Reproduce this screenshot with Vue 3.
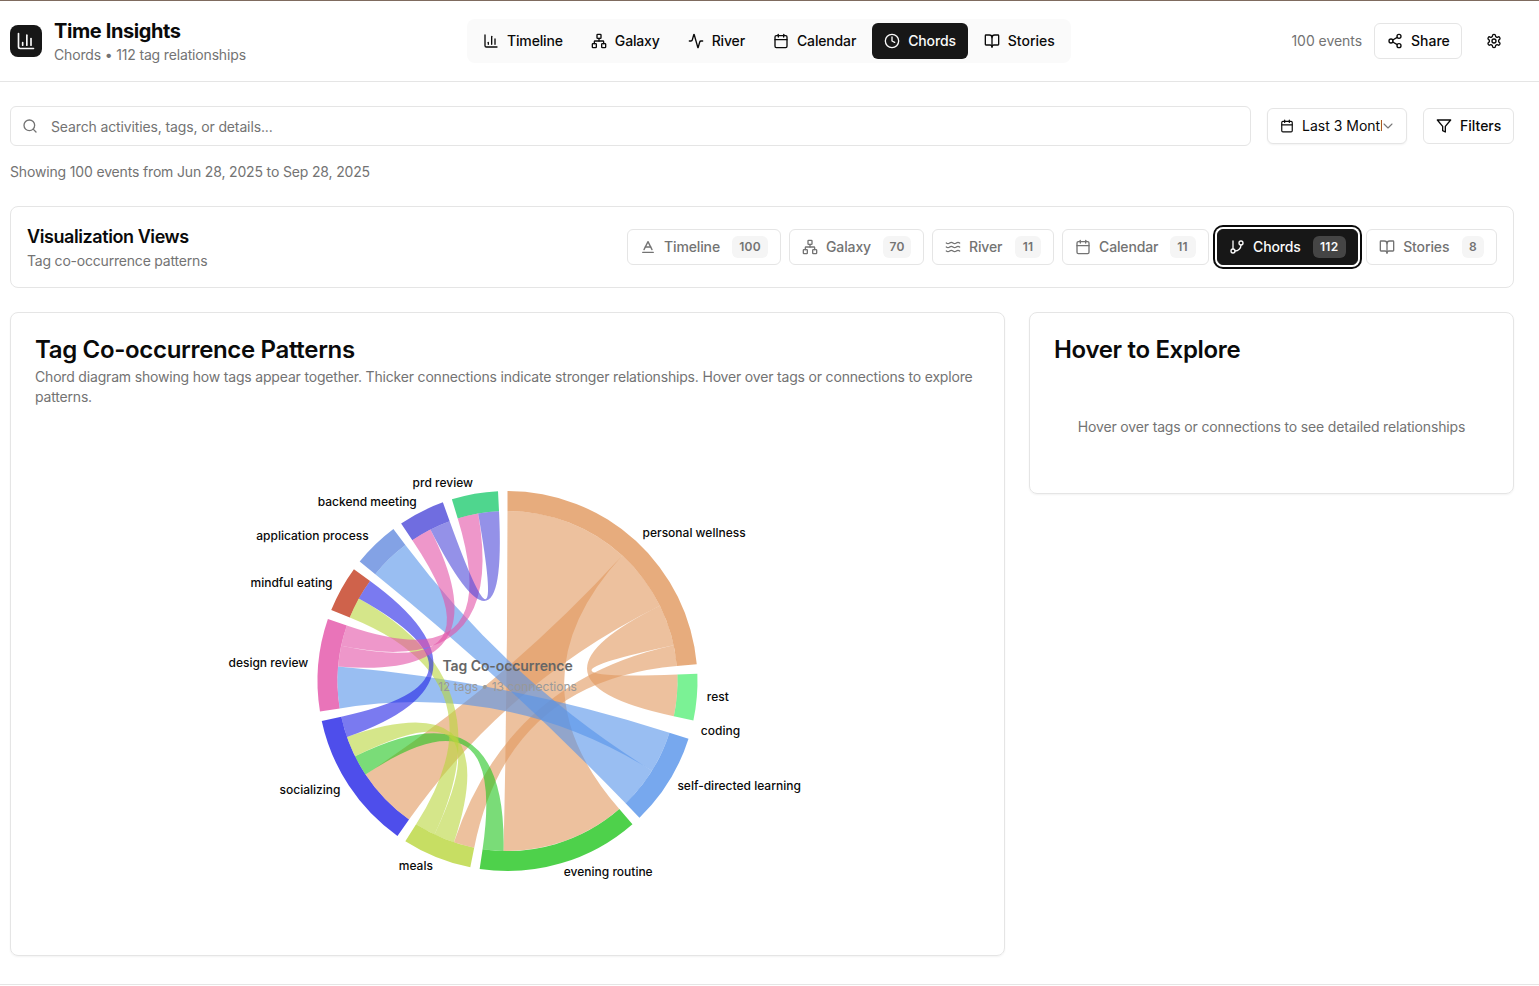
<script setup>
const ICONS = {
  chart: ['M3 3v16a2 2 0 0 0 2 2h16', 'M18 17V9', 'M13 17V5', 'M8 17v-3'],
  network: [
    'M17 16h4a1 1 0 0 1 1 1v4a1 1 0 0 1-1 1h-4a1 1 0 0 1-1-1v-4a1 1 0 0 1 1-1z',
    'M3 16h4a1 1 0 0 1 1 1v4a1 1 0 0 1-1 1H3a1 1 0 0 1-1-1v-4a1 1 0 0 1 1-1z',
    'M10 2h4a1 1 0 0 1 1 1v4a1 1 0 0 1-1 1h-4a1 1 0 0 1-1-1V3a1 1 0 0 1 1-1z',
    'M5 16v-3a1 1 0 0 1 1-1h12a1 1 0 0 1 1 1v3',
    'M12 12V8',
  ],
  activity: ['M22 12h-2.48a2 2 0 0 0-1.93 1.46l-2.35 8.36a.25.25 0 0 1-.48 0L9.24 2.18a.25.25 0 0 0-.48 0l-2.35 8.36A2 2 0 0 1 4.49 12H2'],
  calendar: ['M8 2v4', 'M16 2v4', 'M5 4h14a2 2 0 0 1 2 2v14a2 2 0 0 1-2 2H5a2 2 0 0 1-2-2V6a2 2 0 0 1 2-2z', 'M3 10h18'],
  clock: ['M12 2a10 10 0 1 0 0 20a10 10 0 1 0 0-20z', 'M12 6v6l4 2'],
  book: ['M12 7v14', 'M3 18a1 1 0 0 1-1-1V4a1 1 0 0 1 1-1h5a4 4 0 0 1 4 4 4 4 0 0 1 4-4h5a1 1 0 0 1 1 1v13a1 1 0 0 1-1 1h-6a3 3 0 0 0-3 3 3 3 0 0 0-3-3z'],
  share: ['M21 5a3 3 0 1 1-6 0a3 3 0 1 1 6 0z', 'M9 12a3 3 0 1 1-6 0a3 3 0 1 1 6 0z', 'M21 19a3 3 0 1 1-6 0a3 3 0 1 1 6 0z', 'M8.59 13.51l6.83 3.98', 'M15.41 6.51l-6.82 3.98'],
  gear: [
    'M12.22 2h-.44a2 2 0 0 0-2 2v.18a2 2 0 0 1-1 1.73l-.43.25a2 2 0 0 1-2 0l-.15-.08a2 2 0 0 0-2.73.73l-.22.38a2 2 0 0 0 .73 2.73l.15.1a2 2 0 0 1 1 1.72v.51a2 2 0 0 1-1 1.74l-.15.09a2 2 0 0 0-.73 2.73l.22.38a2 2 0 0 0 2.73.73l.15-.08a2 2 0 0 1 2 0l.43.25a2 2 0 0 1 1 1.73V20a2 2 0 0 0 2 2h.44a2 2 0 0 0 2-2v-.18a2 2 0 0 1 1-1.73l.43-.25a2 2 0 0 1 2 0l.15.08a2 2 0 0 0 2.73-.73l.22-.39a2 2 0 0 0-.73-2.73l-.15-.08a2 2 0 0 1-1-1.74v-.5a2 2 0 0 1 1-1.74l.15-.09a2 2 0 0 0 .73-2.73l-.22-.38a2 2 0 0 0-2.73-.73l-.15.08a2 2 0 0 1-2 0l-.43-.25a2 2 0 0 1-1-1.73V4a2 2 0 0 0-2-2z',
    'M15 12a3 3 0 1 1-6 0a3 3 0 1 1 6 0z',
  ],
  search: ['M19 11a8 8 0 1 1-16 0a8 8 0 1 1 16 0z', 'M21 21l-4.3-4.3'],
  funnel: ['M22 3H2l8 9.46V19l4 2v-8.54L22 3z'],
  chevron: ['M6 9l6 6 6-6'],
  baseline: ['M4 20h16', 'M6 16l6-12 6 12', 'M8 12h8'],
  waves: [
    'M2 6c.6.5 1.2 1 2.5 1C7 7 7 5 9.5 5c2.6 0 2.4 2 5 2 2.5 0 2.5-2 5-2 1.3 0 1.9.5 2.5 1',
    'M2 12c.6.5 1.2 1 2.5 1 2.5 0 2.5-2 5-2 2.6 0 2.4 2 5 2 2.5 0 2.5-2 5-2 1.3 0 1.9.5 2.5 1',
    'M2 18c.6.5 1.2 1 2.5 1 2.5 0 2.5-2 5-2 2.6 0 2.4 2 5 2 2.5 0 2.5-2 5-2 1.3 0 1.9.5 2.5 1',
  ],
  branch: ['M6 3v12', 'M21 6a3 3 0 1 1-6 0a3 3 0 1 1 6 0z', 'M9 18a3 3 0 1 1-6 0a3 3 0 1 1 6 0z', 'M18 9a9 9 0 0 1-9 9'],
}

const navItems = [
  { label: 'Timeline', icon: 'chart' },
  { label: 'Galaxy', icon: 'network' },
  { label: 'River', icon: 'activity' },
  { label: 'Calendar', icon: 'calendar' },
  { label: 'Chords', icon: 'clock', active: true },
  { label: 'Stories', icon: 'book' },
]
const views = [
  { label: 'Timeline', icon: 'baseline', count: 100, cls: 'w-timeline' },
  { label: 'Galaxy', icon: 'network', count: 70, cls: 'w-galaxy' },
  { label: 'River', icon: 'waves', count: 11, cls: 'w-river' },
  { label: 'Calendar', icon: 'calendar', count: 11, cls: 'w-calendar' },
  { label: 'Chords', icon: 'branch', count: 112, cls: 'w-chords', active: true },
  { label: 'Stories', icon: 'book', count: 8, cls: 'w-stories' },
]

// Chord layout
const tags = [
  { name: 'personal wellness', color: '#e1975d' },
  { name: 'rest', color: '#5aef7b' },
  { name: 'coding', color: '#5592ea' },
  { name: 'self-directed learning', color: '#5592ea' },
  { name: 'evening routine', color: '#22c51e' },
  { name: 'meals', color: '#b9d63c' },
  { name: 'socializing', color: '#2222e6' },
  { name: 'design review', color: '#e351a7' },
  { name: 'mindful eating', color: '#c33b1e' },
  { name: 'application process', color: '#648bde' },
  { name: 'backend meeting', color: '#4c48d8' },
  { name: 'prd review', color: '#23cc72' },
]
// [source, target, weight]
const links = [
  [0, 1, 2], [0, 4, 6], [0, 5, 1], [0, 6, 3],
  [3, 7, 2], [3, 9, 2],
  [4, 6, 1],
  [5, 6, 1], [5, 8, 1],
  [6, 8, 1],
  [7, 10, 1], [7, 11, 1],
  [10, 11, 1],
]
const INNER = 170
const OUTER = 190
const PAD = 0.05
const total = links.reduce((s, l) => s + l[2] * 2, 0)
const unit = (Math.PI * 2 - PAD * tags.length) / total
const pt = (a, r) => `${(Math.sin(a) * r).toFixed(3)},${(-Math.cos(a) * r).toFixed(3)}`

const spans = {}
let angle = 0
const groups = tags.map((tag, i) => {
  const start = angle
  links
    .filter((l) => l[0] === i || l[1] === i)
    .map((l) => ({ other: l[0] === i ? l[1] : l[0], value: l[2] }))
    .sort((a, b) => b.value - a.value || a.other - b.other)
    .forEach((s) => {
      spans[`${i}-${s.other}`] = [angle, angle + s.value * unit]
      angle += s.value * unit
    })
  const end = angle
  angle += PAD
  const mid = (start + end) / 2
  return {
    ...tag,
    path: end > start
      ? `M${pt(start, OUTER)}A${OUTER},${OUTER} 0 0 1 ${pt(end, OUTER)}L${pt(end, INNER)}A${INNER},${INNER} 0 0 0 ${pt(start, INNER)}Z`
      : '',
    x: Math.sin(mid) * 200,
    y: -Math.cos(mid) * 200 - 1,
    anchor: mid > Math.PI ? 'end' : 'start',
  }
})
const ribbons = links.map(([s, t]) => {
  const [a0, a1] = spans[`${s}-${t}`]
  const [b0, b1] = spans[`${t}-${s}`]
  return {
    color: tags[s].color,
    path: `M${pt(a0, INNER)}A${INNER},${INNER} 0 0 1 ${pt(a1, INNER)}Q0,0 ${pt(b0, INNER)}A${INNER},${INNER} 0 0 1 ${pt(b1, INNER)}Q0,0 ${pt(a0, INNER)}Z`,
  }
})
</script>

<template>
  <div class="page">
    <header class="header">
      <div class="brand">
        <div class="logo">
          <svg class="icon i20" viewBox="0 0 24 24"><path v-for="d in ICONS.chart" :key="d" :d="d" /></svg>
        </div>
        <div>
          <h1>Time Insights</h1>
          <p class="muted">Chords • 112 tag relationships</p>
        </div>
      </div>
      <nav class="nav">
        <button v-for="n in navItems" :key="n.label" class="nav-btn" :class="{ active: n.active }">
          <svg class="icon" viewBox="0 0 24 24"><path v-for="d in ICONS[n.icon]" :key="d" :d="d" /></svg>
          <span>{{ n.label }}</span>
        </button>
      </nav>
      <div class="actions">
        <span class="muted count">100 events</span>
        <button class="outline share">
          <svg class="icon" viewBox="0 0 24 24"><path v-for="d in ICONS.share" :key="d" :d="d" /></svg>
          <span>Share</span>
        </button>
        <button class="ghost">
          <svg class="icon" viewBox="0 0 24 24"><path v-for="d in ICONS.gear" :key="d" :d="d" /></svg>
        </button>
      </div>
    </header>

    <main class="main">
      <div class="search-row">
        <div class="search">
          <svg class="icon" viewBox="0 0 24 24"><path v-for="d in ICONS.search" :key="d" :d="d" /></svg>
          <span>Search activities, tags, or details...</span>
        </div>
        <button class="outline range">
          <svg class="icon i14" viewBox="0 0 24 24"><path v-for="d in ICONS.calendar" :key="d" :d="d" /></svg>
          <span class="clip">Last 3 Months</span>
          <svg class="icon chev" viewBox="0 0 24 24"><path v-for="d in ICONS.chevron" :key="d" :d="d" /></svg>
        </button>
        <button class="outline filters">
          <svg class="icon" viewBox="0 0 24 24"><path v-for="d in ICONS.funnel" :key="d" :d="d" /></svg>
          <span>Filters</span>
        </button>
      </div>
      <p class="muted showing">Showing 100 events from Jun 28, 2025 to Sep 28, 2025</p>

      <section class="views">
        <div>
          <h2>Visualization Views</h2>
          <p class="muted">Tag co-occurrence patterns</p>
        </div>
        <div class="view-list">
          <button v-for="v in views" :key="v.label" class="view" :class="[v.cls, { active: v.active }]">
            <svg class="icon" viewBox="0 0 24 24"><path v-for="d in ICONS[v.icon]" :key="d" :d="d" /></svg>
            <span>{{ v.label }}</span>
            <span class="badge">{{ v.count }}</span>
          </button>
        </div>
      </section>

      <div class="cards">
        <section class="card chart-card">
          <h3>Tag Co-occurrence Patterns</h3>
          <p class="muted desc">Chord diagram showing how tags appear together. Thicker connections indicate stronger relationships. Hover over tags or connections to explore patterns.</p>
          <svg class="chord" viewBox="-350.5 -250 700 500">
            <path v-for="g in groups" :key="g.name" :d="g.path" :fill="g.color" fill-opacity="0.8" />
            <text v-for="g in groups" :key="'t' + g.name" class="tag" :x="g.x" :y="g.y" dy="0.35em" :text-anchor="g.anchor">{{ g.name }}</text>
            <path v-for="(r, i) in ribbons" :key="i" :d="r.path" :fill="r.color" fill-opacity="0.6" />
            <text class="c-title" x="0" y="-10" text-anchor="middle">Tag Co-occurrence</text>
            <text class="c-sub" x="0" y="10" text-anchor="middle">12 tags • 13 connections</text>
          </svg>
        </section>
        <section class="card side">
          <h3>Hover to Explore</h3>
          <p class="muted hint">Hover over tags or connections to see detailed relationships</p>
        </section>
      </div>
    </main>
    <footer class="footer"></footer>
  </div>
</template>

<style>
html, body { margin: 0; background: #fff; overflow: hidden; }
</style>
<style scoped>
* { box-sizing: border-box; }
.page { height: 986px; overflow: hidden; display: flex; flex-direction: column; border-top: 1px solid #7f6b5f; font: 400 14px/20px Inter, "Liberation Sans", sans-serif; letter-spacing: -0.16px; color: #0a0a0a; background: #fff; }
h1, h2, h3, p { margin: 0; }
button { font: inherit; font-weight: 500; letter-spacing: -0.15px; color: inherit; background: #fff; border: 0; padding: 0; display: flex; align-items: center; gap: 8px; white-space: nowrap; }
.muted { color: #737373; }
.count { letter-spacing: -0.05px; }
.icon { width: 16px; height: 16px; flex: none; fill: none; stroke: currentColor; stroke-width: 2; stroke-linecap: round; stroke-linejoin: round; }
.i20 { width: 20px; height: 20px; }
.i14 { width: 14px; height: 14px; }
.header { height: 81px; flex: none; display: grid; grid-template-columns: 457px 604px 1fr; align-items: center; padding: 0 25px 0 10px; border-bottom: 1px solid #e5e5e5; }
.brand { display: flex; align-items: center; gap: 12px; }
.logo { width: 32px; height: 32px; border-radius: 8px; background: #171717; color: #fafafa; display: grid; place-items: center; }
h1 { font-size: 20px; line-height: 28px; font-weight: 700; letter-spacing: -0.4px; }
.nav { height: 44px; padding: 4px; border-radius: 8px; background: #fafafa; display: flex; gap: 4px; }
.nav-btn { height: 36px; padding: 0 12px; border-radius: 6px; background: transparent; }
.nav-btn.active { background: #171717; color: #fafafa; }
.nav-btn:last-child { letter-spacing: 0; }
.actions { display: flex; align-items: center; justify-content: flex-end; gap: 12px; }
.outline { height: 36px; border: 1px solid #e5e5e5; border-radius: 6px; padding: 0 12px; }
.share { width: 88px; letter-spacing: 0; }
.ghost { width: 40px; height: 36px; justify-content: center; }
.main { padding: 24px 25px 0 10px; height: 902px; flex: none; }
.search-row { display: flex; align-items: center; gap: 16px; }
.search { flex: 1; height: 40px; border: 1px solid #e5e5e5; border-radius: 6px; display: flex; align-items: center; gap: 13px; padding: 0 11px; color: #737373; letter-spacing: -0.13px; }
.search span { padding-top: 2px; }
.range { width: 140px; font-weight: 400; box-shadow: 0 1px 2px rgba(0, 0, 0, 0.05); gap: 0; letter-spacing: 0; }
.clip { width: 80px; overflow: hidden; margin-left: 8px; flex: none; }
.chev { margin-left: -2px; stroke-width: 1.6; opacity: 0.55; }
.filters { width: 91px; letter-spacing: 0; }
.showing { margin-top: 16px; }
.views { margin-top: 24px; height: 82px; border: 1px solid #e5e5e5; border-radius: 8px; padding: 0 16px; display: flex; justify-content: space-between; align-items: center; }
.views p { letter-spacing: -0.2px; }
h2 { font-size: 18px; line-height: 28px; font-weight: 600; letter-spacing: -0.42px; }
.view-list { display: flex; gap: 8px; }
.view { height: 36px; border: 1px solid #e5e5e5; border-radius: 6px; padding: 0 12px; color: #737373; letter-spacing: -0.13px; }
.view.active { background: #171717; border-color: #171717; color: #fafafa; box-shadow: 0 0 0 2px #fff, 0 0 0 4px #0a0a0a; z-index: 1; }
.badge { margin-left: auto; height: 22px; line-height: 22px; text-align: center; border-radius: 6px; background: #f5f5f5; font-size: 12px; font-weight: 600; letter-spacing: 0.2px; }
.active .badge { background: #454545; }
.w-timeline { width: 154px; }
.w-timeline .badge { width: 36px; }
.w-galaxy { width: 135px; }
.w-galaxy .badge { width: 28px; }
.w-river { width: 122px; }
.w-river .badge { width: 26px; }
.w-calendar { width: 146.5px; }
.w-calendar .badge { width: 26px; }
.w-chords { width: 141.7px; padding: 0 11.5px; }
.w-chords .badge { width: 33px; }
.w-stories { width: 130.8px; }
.w-stories .badge { width: 22px; }
.cards { margin-top: 24px; display: grid; grid-template-columns: 995px 485px; gap: 24px; align-items: start; }
.card { border: 1px solid #e5e5e5; border-radius: 8px; box-shadow: 0 1px 2px rgba(0, 0, 0, 0.05); padding: 25px 24px 24px; }
h3 { font-size: 24px; line-height: 24px; font-weight: 600; letter-spacing: -0.33px; }
.chart-card { height: 644px; }
.side { height: 182px; }
.desc { margin-top: 5px; letter-spacing: -0.18px; }
.chord { display: block; width: 700px; height: 500px; margin: 23.7px 0 0 122px; overflow: visible; }
.hint { margin-top: 55px; text-align: center; }
.tag { font-size: 12px; font-weight: 500; letter-spacing: 0; fill: #0a0a0a; }
.c-title { font-size: 14px; font-weight: 600; letter-spacing: -0.08px; fill: #666; }
.c-sub { font-size: 12px; letter-spacing: 0; fill: #999; }
.footer { height: 1px; flex: none; background: #e5e5e5; }
</style>
